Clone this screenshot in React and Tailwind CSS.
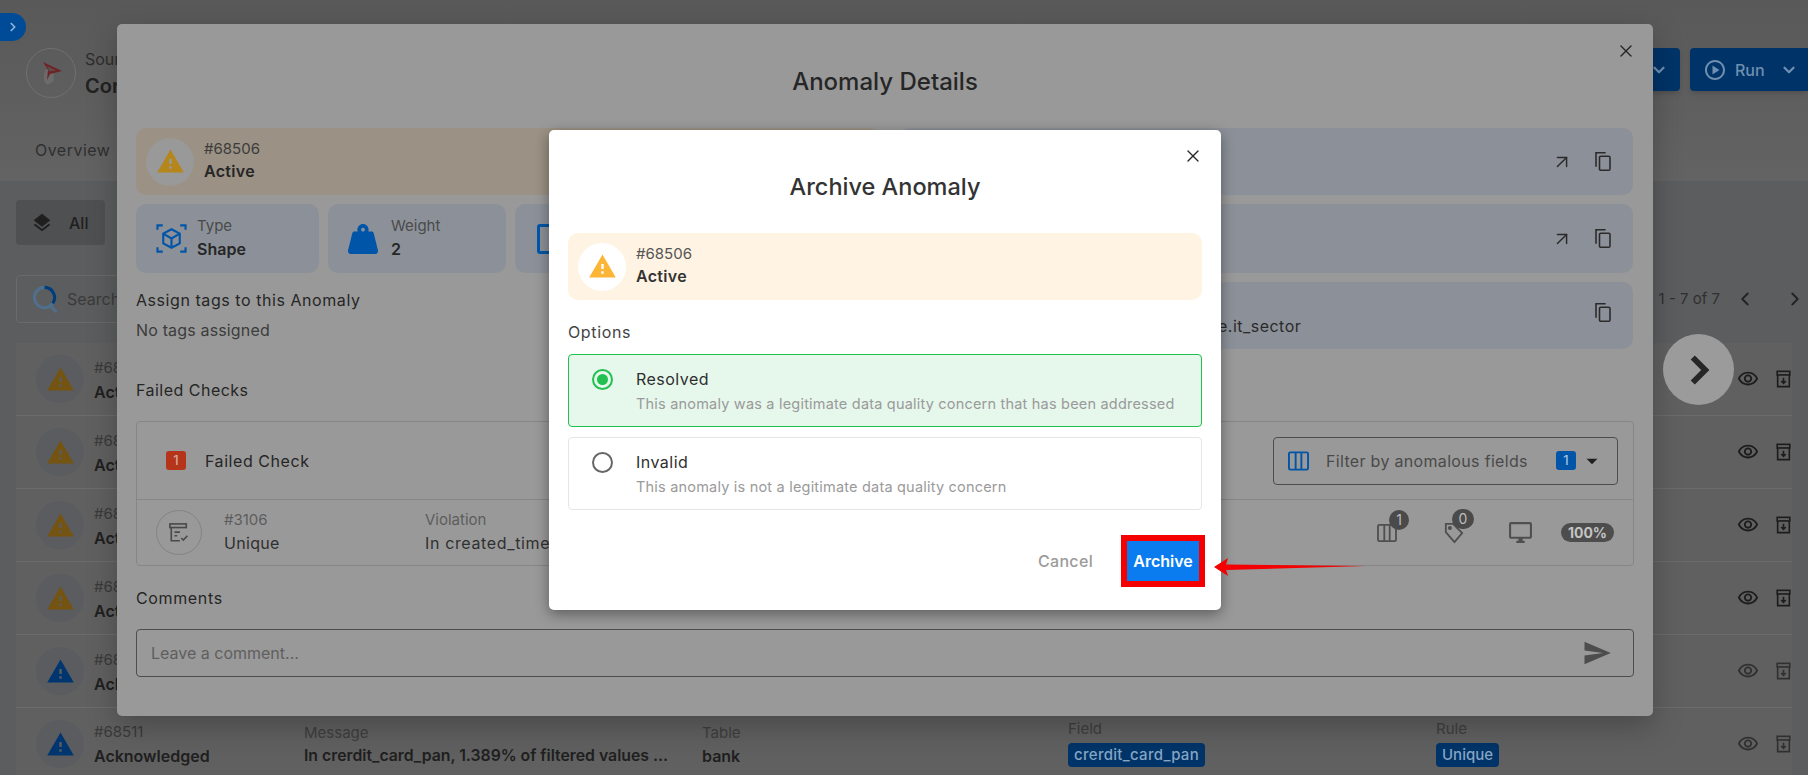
import { X, ChevronDown, ChevronLeft, ChevronRight, ArrowUpRight } from 'lucide-react'
import { MdWarning, MdLayers, MdSend, MdArrowDropDown, MdOutlineVisibility, MdOutlinePlayCircle, MdOutlineDesktopWindows } from 'react-icons/md'
import { FaWeightHanging } from 'react-icons/fa'

const rows = [
  { id: '#68510', status: 'Active', color: 'text-[#755310]', dim: false },
  { id: '#68509', status: 'Active', color: 'text-[#755310]', dim: false },
  { id: '#68508', status: 'Active', color: 'text-[#755310]', dim: false },
  { id: '#68507', status: 'Active', color: 'text-[#755310]', dim: false },
  { id: '#68512', status: 'Acknowledged', color: 'text-[#003670]', dim: true },
  { id: '#68511', status: 'Acknowledged', color: 'text-[#003670]', dim: true, full: true },
]

function CopyIcon({ className }) {
  return (
    <svg viewBox="0 0 20 24" className={className} fill="none" stroke="currentColor" strokeWidth="1.8">
      <path d="M2 18V2h11" />
      <rect x="6" y="6" width="12" height="16" rx="1.5" />
    </svg>
  )
}

function ArchiveIcon({ className }) {
  return (
    <svg viewBox="0 0 18 20" className={className} fill="none" stroke="currentColor" strokeWidth="1.8">
      <rect x="2" y="1.5" width="14" height="4" />
      <path d="M2.5 5.5V18.500H15.500V5.500" />
      <path d="M9 8.500v6M6.500 12.200 9 14.800l2.500-2.600" />
    </svg>
  )
}

function ColumnsIcon({ className }) {
  return (
    <svg viewBox="0 0 22 20" className={className} fill="none" stroke="currentColor" strokeWidth="2">
      <rect x="1" y="1" width="20" height="18" rx="1.500" />
      <path d="M8 1v18M14 1v18" />
    </svg>
  )
}

function ShapeIcon({ className }) {
  return (
    <svg viewBox="0 0 32 32" className={className} fill="none" stroke="currentColor" strokeWidth="2.200">
      <path d="M1.500 7V2.500H7M25 2.500h5.500V7M30.500 25v4.500H25M7 29.500H1.500V25" />
      <path d="M16 6.500 24.500 11v10L16 25.500 7.500 21V11z" />
      <path d="M7.500 11 16 16l8.500-5M16 16v9.500" />
    </svg>
  )
}

function TagIcon({ className }) {
  return (
    <svg viewBox="0 0 22 24" className={className} fill="none" stroke="currentColor" strokeWidth="2">
      <path d="M2 2h8l10 10-8.500 10L2 11z" />
      <circle cx="6.500" cy="6.500" r="1.200" fill="currentColor" />
    </svg>
  )
}

function CheckDocIcon({ className }) {
  return (
    <svg viewBox="0 0 22 22" className={className} fill="none" stroke="currentColor" strokeWidth="1.800">
      <rect x="1" y="1" width="18" height="4" />
      <path d="M2.500 5v14.500H12M6 10h6M6 14h3" />
      <path d="M13.500 16.500l2.200 2.200 4.500-4.700" />
    </svg>
  )
}

function SearchRing({ className }) {
  return (
    <svg viewBox="0 0 26 30" className={className} fill="none" strokeWidth="3.200">
      <circle cx="12.500" cy="13" r="10.500" stroke="#4f6f8c" />
      <path d="M12.500 2.500A10.500 10.500 0 0 1 21 19" stroke="#003c78" />
      <path d="M18 21l6 6" stroke="#4f6f8c" strokeLinecap="round" />
    </svg>
  )
}

function SqlLogo() {
  return (
    <svg viewBox="0 0 24 26" className="h-[26px] w-[24px]">
      <path d="M7 9c-3 5-3 11 0 15 3 1 7-1 8-5l-1-9z" fill="#6b6b6b" />
      <path d="M4 2l19 9-12 3-3 6 1-10z" fill="#6f2326" />
      <path d="M8 6l9 4.500-7 1z" fill="#5e4a4a" />
    </svg>
  )
}

function Alert({ iconCircle, iconColor, idColor, statusColor, bg, className }) {
  return (
    <div className={`flex h-[67px] items-center rounded-[10px] pl-[10px] ${bg} ${className}`}>
      <div className={`flex h-[48px] w-[48px] items-center justify-center rounded-full ${iconCircle}`}>
        <MdWarning className={`h-[29px] w-[29px] ${iconColor}`} />
      </div>
      <div className="ml-[10px] -mt-[2px] flex flex-col">
        <span className={`text-[15px] leading-[20px] ${idColor}`}>#68506</span>
        <span className={`mt-[1px] text-[16px] font-semibold leading-[22px] tracking-[0.02em] ${statusColor}`}>Active</span>
      </div>
    </div>
  )
}

function Page() {
  return (
    <div className="flex h-[775px] w-[1808px] flex-col bg-[#5c5d5e] text-[#222]">
      {/* Header */}
      <div className="h-[181px] shrink-0 bg-gradient-to-b from-[#595959] to-[#636363]">
        <div className="h-[13px]" />
        <div className="flex h-[28px] w-[26px] items-center justify-center rounded-r-full bg-[#004b97] text-[#8fb3d8]">
          <ChevronRight size={14} strokeWidth={3} />
        </div>
        <div className="mt-[7px] flex items-start pl-[26px]">
          <div className="flex h-[50px] w-[50px] items-center justify-center rounded-full border border-[#707070]">
            <SqlLogo />
          </div>
          <div className="ml-[9px] flex w-[32px] flex-col overflow-hidden whitespace-nowrap">
            <span className="text-[16px] leading-[22px] text-[#2d2d2d]">Source</span>
            <span className="mt-[4px] text-[20px] font-semibold leading-[24px]">Connection</span>
          </div>
          <div className="ml-auto flex gap-[10px]">
            <div className="flex h-[43px] w-[100px] items-center justify-end rounded-[4px] bg-[#003468] pr-[12px] text-[#6f8fb0] shadow-md">
              <ChevronDown size={18} strokeWidth={3} />
            </div>
            <div className="flex h-[43px] w-[118px] items-center rounded-l-[4px] bg-[#003468] pl-[13px] text-[#6f8fb0] shadow-md">
              <MdOutlinePlayCircle size={24} />
              <span className="ml-[8px] text-[16px] font-medium">Run</span>
              <ChevronDown size={18} strokeWidth={3} className="ml-[15px]" />
            </div>
          </div>
        </div>
        <div className="mt-[41px] pl-[35px] text-[16px] font-normal leading-[22px] tracking-[0.03em] text-[#2f2f2f]">Overview</div>
      </div>

      {/* Content */}
      <div className="flex flex-1 flex-col px-[16px]">
        <div className="mt-[19px] flex h-[45px] w-[89px] shrink-0 items-center rounded-[4px] bg-[#4f5052] pl-[15px]">
          <MdLayers size={22} className="text-[#1f1f1f]" />
          <span className="ml-[16px] text-[16px] font-medium text-[#1f1f1f]">All</span>
        </div>
        <div className="mt-[30px] flex h-[48px] shrink-0 items-center">
          <div className="flex h-[48px] w-[400px] items-center rounded-[4px] border border-[#696a6b] pl-[15px]">
            <SearchRing className="h-[29px] w-[26px]" />
            <span className="ml-[9px] w-[50px] overflow-hidden text-[16px] text-[#3b3b3b]">Search</span>
          </div>
          <span className="ml-auto text-[15px] text-[#303030]">1 - 7 of 7</span>
          <ChevronLeft size={22} className="ml-[14px] text-[#222]" />
          <ChevronRight size={22} className="ml-[28px] mr-[-14px] text-[#222]" />
        </div>
        <div className="mt-[20px] flex flex-col bg-[#606060]">
          {rows.map(r => (
            <div key={r.id} className="flex h-[73px] shrink-0 items-center border-b border-[#6b6b6b] pl-[20px]">
              <div className="flex h-[48px] w-[48px] items-center justify-center rounded-full bg-[#5a5c5f]">
                <MdWarning className={`h-[29px] w-[29px] ${r.color}`} />
              </div>
              {r.full ? (
                <>
                  <div className="ml-[10px] mt-[1px] flex w-[210px] flex-col">
                    <span className="text-[15px] leading-[20px] text-[#3a3a3a]">{r.id}</span>
                    <span className="mt-[3px] text-[16px] font-semibold leading-[22px] text-[#1f1f1f]">{r.status}</span>
                  </div>
                  <div className="mt-[1px] flex w-[398px] flex-col">
                    <span className="text-[15px] leading-[20px] text-[#3e3e3e]">Message</span>
                    <span className="mt-[2px] whitespace-nowrap text-[15.800px] font-semibold leading-[22px] text-[#1f1f1f]">In crerdit_card_pan, 1.389% of filtered values ...</span>
                  </div>
                  <div className="mt-[1px] flex w-[366px] flex-col">
                    <span className="text-[15px] leading-[20px] text-[#3e3e3e]">Table</span>
                    <span className="mt-[2px] text-[16px] font-semibold leading-[22px] text-[#1f1f1f]">bank</span>
                  </div>
                  <div className="-mt-[3px] flex w-[368px] flex-col items-start">
                    <span className="text-[15px] leading-[20px] text-[#3e3e3e]">Field</span>
                    <span className="mt-[4px] rounded-[4px] bg-[#003468] px-[6px] text-[15px] font-medium leading-[24px] tracking-[0.02em] text-[#88a5c4]">crerdit_card_pan</span>
                  </div>
                  <div className="-mt-[3px] flex flex-col items-start">
                    <span className="text-[15px] leading-[20px] text-[#3e3e3e]">Rule</span>
                    <span className="mt-[4px] rounded-[4px] bg-[#003468] px-[6px] text-[15px] font-medium leading-[24px] text-[#88a5c4]">Unique</span>
                  </div>
                </>
              ) : (
                <div className="ml-[10px] mt-[2px] flex w-[23px] flex-col overflow-hidden whitespace-nowrap">
                  <span className="text-[15px] leading-[20px] text-[#3a3a3a]">{r.id}</span>
                  <span className="mt-[3px] text-[16px] font-semibold leading-[22px] text-[#1f1f1f]">{r.status}</span>
                </div>
              )}
              <div className={`ml-auto flex items-center gap-[16px] text-[#1c1c1c] ${r.dim ? 'opacity-70' : ''}`}>
                <MdOutlineVisibility size={22} />
                <ArchiveIcon className="h-[18px] w-[17px] text-[#1c1c1c]" />
              </div>
            </div>
          ))}
        </div>
      </div>
    </div>
  )
}

function DetailsModal() {
  return (
    <div className="relative ml-[117px] mt-[24px] flex h-[692px] w-[1536px] flex-col rounded-[5px] bg-[#999999] px-[19px] text-[#262626] shadow-[0_10px_30px_rgba(0,0,0,0.25)]">
      <X size={20} strokeWidth={1.6} className="absolute right-[17px] top-[17px] text-[#262626]" />
      <h2 className="mt-[43px] text-center text-[24px] font-medium leading-[30px] text-[#262626]">Anomaly Details</h2>

      <div className="mt-[31px] grid grid-cols-[744px_734px] gap-x-[19px]">
        {/* Left */}
        <div className="flex flex-col">
          <Alert
            bg="bg-[#9b9184]"
            iconCircle="bg-[#999999]"
            iconColor="text-[#b5861c]"
            idColor="text-[#3c3c3c]"
            statusColor="text-[#262626]"
          />
          <div className="mt-[9px] flex gap-[9px]">
            <div className="flex h-[69px] w-[183px] items-center rounded-[10px] bg-[#8c9199] pl-[20px]">
              <ShapeIcon className="h-[33px] w-[31px] text-[#0055a8]" />
              <div className="ml-[10px] -mt-[2px] flex flex-col">
                <span className="text-[15px] leading-[20px] text-[#4a4a4a]">Type</span>
                <span className="mt-[2px] text-[16px] font-semibold leading-[22px]">Shape</span>
              </div>
            </div>
            <div className="flex h-[69px] w-[178px] items-center rounded-[10px] bg-[#8c9199] pl-[20px]">
              <FaWeightHanging className="h-[30px] w-[30px] text-[#0055a8]" />
              <div className="ml-[13px] -mt-[2px] flex flex-col">
                <span className="text-[15px] leading-[20px] text-[#4a4a4a]">Weight</span>
                <span className="mt-[2px] text-[16px] font-semibold leading-[22px]">2</span>
              </div>
            </div>
            <div className="flex h-[69px] flex-1 items-center rounded-[10px] bg-[#8c9199] pl-[22px]">
              <div className="h-[30px] w-[26px] rounded-[3px] border-[3px] border-[#0055a8]" />
            </div>
          </div>
          <p className="mt-[16px] text-[16px] font-normal leading-[22px] tracking-[0.035em]">Assign tags to this Anomaly</p>
          <p className="mt-[8px] text-[16px] leading-[22px] tracking-[0.01em] text-[#3c3c3c]">No tags assigned</p>
        </div>
        {/* Right */}
        <div className="flex flex-col gap-[9px]">
          <div className="flex h-[67px] items-center justify-end gap-[21px] rounded-[10px] bg-[#8c9199] pr-[21px] text-[#2a2a2a]">
            <ArrowUpRight size={22} strokeWidth={1.6} />
            <CopyIcon className="h-[21px] w-[18px]" />
          </div>
          <div className="flex h-[69px] items-center justify-end gap-[21px] rounded-[10px] bg-[#8c9199] pr-[21px] text-[#2a2a2a]">
            <ArrowUpRight size={22} strokeWidth={1.6} />
            <CopyIcon className="h-[21px] w-[18px]" />
          </div>
          <div className="flex h-[67px] items-end rounded-[10px] bg-[#8c9199] pb-[12px] pl-[319px] pr-[21px] text-[#2a2a2a]">
            <span className="text-[16px] font-normal leading-[22px] tracking-[0.03em]">e.it_sector</span>
            <CopyIcon className="ml-auto mb-[14px] h-[21px] w-[18px]" />
          </div>
        </div>
      </div>

      <p className="mt-[30px] text-[16px] font-normal leading-[22px] tracking-[0.03em]">Failed Checks</p>

      {/* Failed check box */}
      <div className="mt-[20px] h-[145px] w-[1498px] rounded-[4px] border border-[#868686]">
        <div className="flex h-[78px] items-center border-b border-[#868686] pl-[29px] pr-[15px]">
          <span className="flex h-[19px] w-[20px] items-center justify-center rounded-[3px] bg-[#b5351a] text-[13px] font-medium text-[#d6a8a0]">1</span>
          <span className="ml-[19px] text-[16px] font-normal tracking-[0.035em]">Failed Check</span>
          <div className="ml-auto flex h-[48px] w-[345px] items-center rounded-[4px] border border-[#4d4d4d] pl-[14px]">
            <ColumnsIcon className="h-[20px] w-[21px] text-[#0055a8]" />
            <span className="ml-[17px] text-[16px] tracking-[0.02em] text-[#4a4a4a]">Filter by anomalous fields</span>
            <span className="ml-auto flex h-[19px] w-[20px] items-center justify-center rounded-[3px] bg-[#0055a8] text-[13px] font-medium text-[#9fc0e0]">1</span>
            <MdArrowDropDown size={26} className="ml-[3px] mr-[12px] text-[#1f1f1f]" />
          </div>
        </div>
        <div className="flex h-[65px] items-center pl-[19px] pr-[19px]">
          <div className="flex h-[45px] w-[46px] items-center justify-center rounded-full border border-[#838383]">
            <CheckDocIcon className="h-[20px] w-[20px] text-[#4a4a4a]" />
          </div>
          <div className="ml-[22px] -mt-[2px] flex w-[201px] flex-col">
            <span className="text-[15px] leading-[20px] text-[#5d5d5d]">#3106</span>
            <span className="mt-[2px] text-[16px] font-normal leading-[22px] tracking-[0.02em] text-[#303030]">Unique</span>
          </div>
          <div className="-mt-[2px] flex w-[124px] flex-col overflow-hidden whitespace-nowrap">
            <span className="text-[15px] leading-[20px] text-[#5d5d5d]">Violation</span>
            <span className="mt-[2px] text-[16px] font-normal leading-[22px] tracking-[0.04em] text-[#303030]">In created_time</span>
          </div>
          <div className="ml-auto flex items-center text-[#4f4f4f]">
            <div className="relative">
              <ColumnsIcon className="h-[18px] w-[20px]" />
              <span className="absolute -right-[12px] -top-[14px] flex h-[20px] w-[20px] items-center justify-center rounded-full bg-[#4a4a4a] text-[14px] text-[#bcbcbc]">1</span>
            </div>
            <div className="relative ml-[47px]">
              <TagIcon className="h-[22px] w-[20px]" />
              <span className="absolute -right-[10px] -top-[13px] flex h-[20px] w-[22px] items-center justify-center rounded-full bg-[#4a4a4a] text-[14px] text-[#bcbcbc]">0</span>
            </div>
            <MdOutlineDesktopWindows size={25} className="ml-[44px]" />
            <span className="ml-[28px] flex h-[19px] w-[53px] items-center justify-center rounded-full bg-[#4d4d4d] text-[14px] font-bold text-[#c4c4c4]">100%</span>
          </div>
        </div>
      </div>

      <p className="mt-[21px] text-[16px] font-normal leading-[22px] tracking-[0.04em]">Comments</p>
      <div className="mt-[20px] flex h-[48px] w-[1498px] items-center rounded-[4px] border border-[#4d4d4d] pl-[14px] pr-[21px]">
        <span className="text-[16px] text-[#5f5f5f]">Leave a comment...</span>
        <MdSend size={30} className="ml-auto text-[#4d4d4d]" />
      </div>
    </div>
  )
}

function OptionCard({ selected, title, desc }) {
  return (
    <div className={`flex h-[73px] items-start rounded-[4px] border pl-[23px] pt-[12px] ${selected ? 'border-[#22c04f] bg-[#e6f7ec]' : 'border-[#e6e6e6] bg-white'}`}>
      <div className={`mt-[2px] flex h-[21px] w-[21px] items-center justify-center rounded-full border-[2px] ${selected ? 'border-[#22c04f]' : 'border-[#666]'}`}>
        {selected && <div className="h-[11px] w-[11px] rounded-full bg-[#22c04f]" />}
      </div>
      <div className="ml-[23px] flex flex-col">
        <span className="text-[16px] leading-[24px] tracking-[0.03em] text-[#2f2f2f]">{title}</span>
        <span className="mt-[2px] text-[14.500px] leading-[22px] tracking-[0.2px] text-[#9a9a9a]">{desc}</span>
      </div>
    </div>
  )
}

function ArchiveModal() {
  return (
    <div className="relative flex h-[480px] w-[672px] flex-col rounded-[5px] bg-white px-[19px] shadow-[0_4px_14px_rgba(0,0,0,0.4)]">
      <X size={20} strokeWidth={1.6} className="absolute right-[18px] top-[16px] text-[#2b2b2b]" />
      <h2 className="mt-[42px] text-center text-[23.500px] font-medium leading-[30px] text-[#333]">Archive Anomaly</h2>
      <Alert
        className="mt-[31px]"
        bg="bg-[#fff3e3]"
        iconCircle="bg-white"
        iconColor="text-[#fdb535]"
        idColor="text-[#555]"
        statusColor="text-[#333]"
      />
      <p className="mt-[21px] text-[16px] font-normal leading-[22px] tracking-[0.04em] text-[#444]">Options</p>
      <div className="mt-[11px] flex flex-col gap-[10px]">
        <OptionCard selected title="Resolved" desc="This anomaly was a legitimate data quality concern that has been addressed" />
        <OptionCard title="Invalid" desc="This anomaly is not a legitimate data quality concern" />
      </div>
      <div className="mt-[25px] flex items-center justify-end">
        <span className="mr-[28px] text-[16px] font-medium tracking-[0.02em] text-[#9b9b9b]">Cancel</span>
        <div className="mr-[-3px] border-[6px] border-[#f40000]">
          <button className="flex h-[40px] w-[72px] items-center justify-center bg-[#0a7cf0] text-[16px] font-semibold text-white">Archive</button>
        </div>
      </div>
    </div>
  )
}

export default function App() {
  return (
    <div className="relative h-[775px] w-[1808px] overflow-hidden font-['Inter',sans-serif]">
      <Page />

      {/* dialog stack */}
      <div className="absolute inset-0">
        <DetailsModal />
      </div>
      <div className="absolute inset-0 pl-[549px] pt-[130px]">
        <ArchiveModal />
      </div>

      {/* screenshot annotations */}
      <svg viewBox="0 0 160 24" className="absolute left-[1212px] top-[555px] h-[24px] w-[160px]">
        <path d="M2 12 16 3l-2 6.500L154 11 14 15l2 6z" fill="#f40000" />
      </svg>
      <div className="absolute left-[1663px] top-[334px] flex h-[71px] w-[71px] items-center justify-center rounded-full bg-[#9b9b9b]">
        <ChevronRight size={50} strokeWidth={2.800} strokeLinecap="butt" strokeLinejoin="miter" className="text-[#262626]" />
      </div>
    </div>
  )
}
